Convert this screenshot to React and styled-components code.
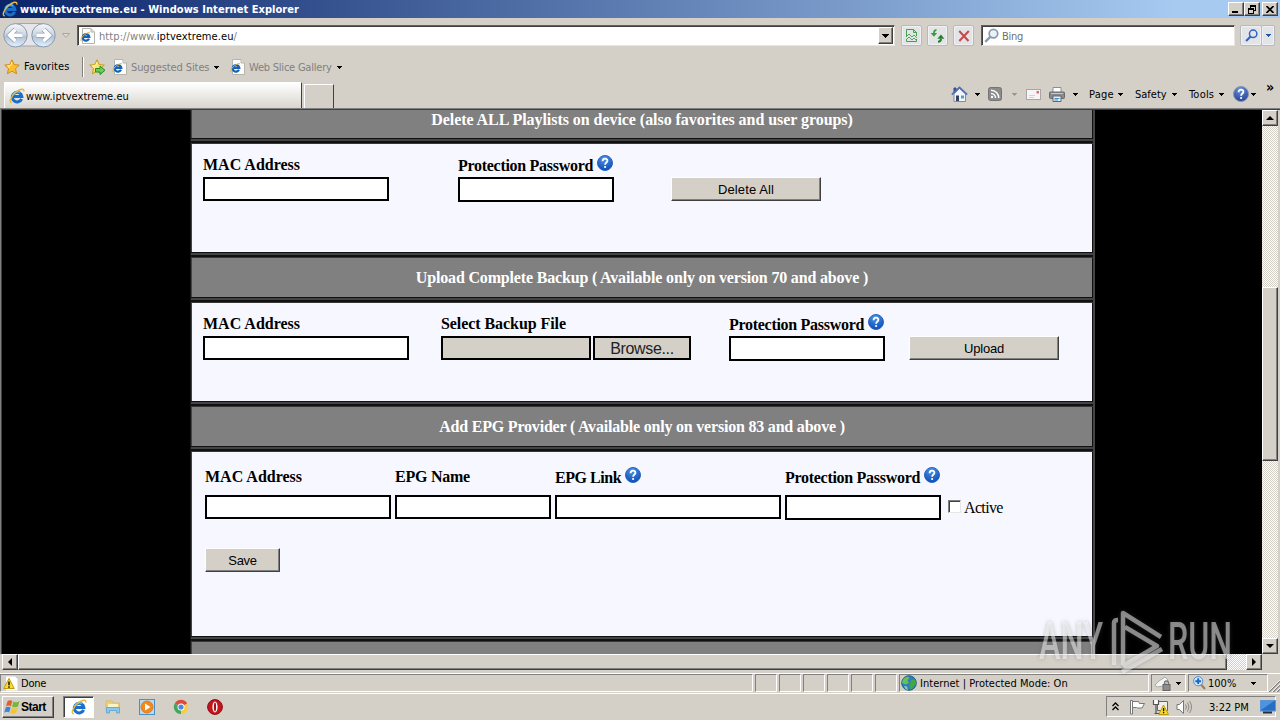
import React, { useState } from "react";
import styled, { createGlobalStyle, css } from "styled-components";

const GlobalStyle = createGlobalStyle`
  * {
    box-sizing: border-box;
  }
  body {
    margin: 0;
    overflow: hidden;
    background: #d4d0c8;
    font-family: "DejaVu Sans Condensed", "DejaVu Sans", sans-serif;
    font-size: 11px;
    color: #000;
  }
  svg {
    display: block;
    flex: none;
  }
`;

const raised = css`
  background: #d4d0c8;
  border: 1px solid;
  border-color: #fff #404040 #404040 #fff;
  box-shadow: inset -1px -1px 0 #808080;
`;

const sunken = css`
  border: 1px solid;
  border-color: #808080 #fff #fff #808080;
`;

const Window = styled.div`
  position: relative;
  display: flex;
  flex-direction: column;
  width: 1280px;
  height: 720px;
  overflow: hidden;
`;

const Text = styled.span`
  flex: none;
  width: ${(p) => (p.$w ? `${p.$w}px` : "auto")};
  margin-left: ${(p) => p.$ml || 0}px;
  padding-top: ${(p) => (p.$flat ? 0 : 2)}px;
  letter-spacing: ${(p) => p.$ls || 0}px;
  color: ${(p) => p.$color || "inherit"};
  font-weight: ${(p) => (p.$bold ? 700 : 400)};
  font-size: ${(p) => p.$size || 11}px;
  line-height: 14px;
  white-space: pre;
`;

const Host = styled.span`
  color: #000;
`;

const Slot = styled.div`
  display: flex;
  flex: none;
  margin-left: ${(p) => p.$ml || 0}px;
  padding-top: ${(p) => p.$pt || 0}px;
`;

/* title bar */
const TitleBar = styled.header`
  display: flex;
  align-items: center;
  height: 18px;
  padding: 0 2px;
  background: linear-gradient(90deg, #0a246a, #a6caf0 92%);
  color: #fff;
`;

const Spacer = styled.div`
  flex: 1;
`;

const CaptionButton = styled.button`
  ${raised}
  display: flex;
  align-items: center;
  justify-content: center;
  width: 16px;
  height: 14px;
  padding: 0;
  margin-left: ${(p) => p.$ml || 0}px;
`;

/* navigation row */
const NavRow = styled.div`
  display: flex;
  height: 34px;
  padding: 7px 0 0 3px;
`;

const NavCircles = styled.div`
  margin-top: -3px;
  width: 56px;
`;

const AddressBox = styled.div`
  display: flex;
  align-items: center;
  width: 818px;
  height: 21px;
  margin-left: 6px;
  padding: 0 1px 0 2px;
  background: #fff;
  border: 1px solid;
  border-color: #606060 #e8e4de #e8e4de #606060;
  box-shadow: inset 1px 1px 0 #404040;
`;

const ComboButton = styled.button`
  ${raised}
  display: flex;
  align-items: center;
  justify-content: center;
  width: 15px;
  height: 17px;
  padding: 0;
`;

const NavButton = styled.button`
  display: flex;
  align-items: center;
  justify-content: center;
  width: ${(p) => p.$w || 21}px;
  height: 21px;
  margin-left: ${(p) => p.$ml}px;
  padding: 0;
  background: #e3e4e6;
  border: 1px solid #b4bac2;
  border-radius: 2px;
  box-shadow: inset 0 0 0 1px #eff1f4;
`;

const SearchBox = styled(AddressBox)`
  width: 254px;
  margin-left: 7px;
`;

/* favorites row */
const FavoritesRow = styled.div`
  display: flex;
  align-items: center;
  height: 30px;
  padding-left: 4px;
`;

const Divider = styled.i`
  width: 2px;
  height: 20px;
  margin: 0 5px 0 11px;
  border-left: 1px solid #808080;
  border-right: 1px solid #fff;
`;

/* tab row */
const TabRow = styled.div`
  display: flex;
  align-items: flex-end;
  height: 26px;
  padding-left: 4px;
`;

const Tab = styled.div`
  display: flex;
  align-items: center;
  width: 298px;
  height: 26px;
  padding-left: 4px;
  background: linear-gradient(#fff, #eceae6 50%, #d9d6d0);
  border-top: 1px solid #fff;
  border-left: 1px solid #fff;
  border-right: 1px solid #404040;
`;

const NewTab = styled.div`
  width: 30px;
  height: 24px;
  margin-left: 2px;
  border: 1px solid #fff;
  border-right: 1px solid #404040;
  border-bottom: 0;
`;

const CommandBar = styled.div`
  display: flex;
  align-items: center;
  align-self: flex-start;
  height: 24px;
  margin-left: 617px;
`;

const Chevron = styled(Text)`
  align-self: flex-start;
  margin-top: -4px;
`;

/* viewport and scroll bars */
const Viewport = styled.main`
  display: flex;
  height: 546px;
  border-top: 1px solid #808080;
  border-left: 1px solid #808080;
  box-shadow: inset 1px 1px 0 #404040;
  padding: 1px 2px 0 1px;
`;

const Page = styled.div`
  display: flex;
  justify-content: flex-start;
  width: 1260px;
  height: 544px;
  padding-left: 188px;
  background: #000;
  overflow: hidden;
`;

const track = css`
  background: repeating-conic-gradient(#fff 0 25%, #d4d0c8 0 50%) 0 0 / 2px 2px;
`;

const VerticalBar = styled.div`
  ${track}
  display: flex;
  flex-direction: column;
  width: 16px;
  height: 544px;
`;

const HorizontalBar = styled.div`
  display: flex;
  height: 16px;
  padding-left: 2px;
`;

const HorizontalTrack = styled.div`
  ${track}
  width: 19px;
  height: 16px;
`;

const ScrollButton = styled.button`
  ${raised}
  display: flex;
  align-items: center;
  justify-content: center;
  width: 16px;
  height: 16px;
  padding: 0;
`;

const ThumbVertical = styled.div`
  ${raised}
  height: 174px;
  margin: 161px 0 177px;
`;

const ThumbHorizontal = styled.div`
  ${raised}
  width: 1209px;
  height: 16px;
`;

/* site form */
const Frame = styled.div`
  width: 905px;
  height: 544px;
  border-left: 1px solid #161616;
  border-right: 2px solid #444;
  overflow: hidden;
`;

const Inner = styled.div`
  border-left: 1px solid #444;
  border-right: 1px solid #111;
`;

const Separator = styled.div`
  height: 6px;
  margin: 0 -1px;
  background: linear-gradient(
    #111 0 1px,
    #444 1px 3px,
    #111 3px 5px,
    #383838 5px 6px
  );
`;

const Heading = styled.h2`
  display: flex;
  justify-content: center;
  height: ${(p) => p.$h || 39}px;
  margin: 0;
  padding-top: ${(p) => (p.$pt === undefined ? 10 : p.$pt)}px;
  background: #808080;
  color: #fff;
  font: bold 16px/20px "Liberation Serif", serif;
  letter-spacing: ${(p) => p.$ls || 0}px;
  white-space: pre;
`;

const Panel = styled.section`
  height: ${(p) => p.$h}px;
  padding: ${(p) => p.$pt}px 0 0 ${(p) => p.$pl}px;
  background: #f7f8ff;
`;

const Fields = styled.div`
  display: flex;
  align-items: flex-start;
`;

const FieldBox = styled.div`
  width: ${(p) => p.$w}px;
  margin-left: ${(p) => p.$ml || 0}px;
`;

const FieldLabel = styled.label`
  display: flex;
  height: ${(p) => p.$h}px;
  padding-top: ${(p) => (p.$help ? 1 : 0)}px;
  font: bold 16px/20px "Liberation Serif", serif;
  letter-spacing: ${(p) => p.$ls || 0}px;
  white-space: pre;

  svg {
    margin: -1px 0 0 4px;
  }
`;

const Input = styled.input`
  display: block;
  width: 100%;
  height: ${(p) => p.$h || 24}px;
  padding: 1px 3px;
  background: #fff;
  border: 2px solid #000;
  border-radius: 0;
  outline: none;
`;

const FileRow = styled.div`
  display: flex;
  gap: 2px;
`;

const FilePath = styled.div`
  width: 150px;
  height: 24px;
  background: #d4d0c8;
  border: 2px solid #000;
`;

const Browse = styled.button`
  width: 98px;
  height: 24px;
  padding: 1px 0 0;
  background: #d4d0c8;
  border: 2px solid #000;
  color: #222;
  font: 16px/19px "Liberation Sans", sans-serif;
  letter-spacing: -0.35px;
`;

const PushButton = styled.button`
  ${raised}
  width: ${(p) => p.$w || 150}px;
  height: 24px;
  margin: ${(p) => p.$mt}px 0 0 ${(p) => p.$ml || 0}px;
  padding: 2px 0 0;
  font: 13px/20px "Liberation Sans", sans-serif;
  letter-spacing: ${(p) => p.$ls || 0}px;
`;

const Check = styled.button`
  width: 13px;
  height: 13px;
  margin: 33px 0 0 7px;
  padding: 0;
  background: #fff;
  border: 1px solid;
  border-color: #808080 #e8e6e0 #e8e6e0 #808080;
  box-shadow: inset 1px 1px 0 #404040;
  font: 10px/10px "DejaVu Sans", sans-serif;
`;

const CheckLabel = styled.span`
  margin: 31px 0 0 3px;
  font: 16px/20px "Liberation Serif", serif;
  letter-spacing: -0.65px;
`;

/* status bar */
const StatusBar = styled.div`
  display: flex;
  height: 19px;
  margin-top: 3px;
  border-top: 1px solid #fff;
`;

const StatusCell = styled.div`
  ${sunken}
  display: flex;
  align-items: center;
  width: ${(p) => p.$w}px;
  height: 18px;
  margin-right: ${(p) => (p.$mr === undefined ? 2 : p.$mr)}px;
  padding-left: ${(p) => p.$pl || 0}px;
`;

/* taskbar */
const TaskBar = styled.footer`
  display: flex;
  height: 27px;
  margin-top: 1px;
  padding: 2px 4px 0 2px;
  border-top: 1px solid #fff;
`;

const StartButton = styled.button`
  ${raised}
  display: flex;
  align-items: center;
  width: 52px;
  height: 22px;
  padding: 0 0 0 1px;
`;

const ActiveTask = styled.div`
  ${sunken}
  display: flex;
  align-items: center;
  justify-content: center;
  width: 31px;
  height: 22px;
  margin-left: 9px;
  background: #fff;
  box-shadow: inset 1px 1px 0 #404040;
`;

const TaskIcon = styled.div`
  width: 16px;
  margin: 3px 0 0 ${(p) => p.$ml}px;
`;

const Tray = styled.div`
  ${sunken}
  display: flex;
  align-items: center;
  width: 170px;
  height: 21px;
  padding-left: 5px;
`;

const Watermark = styled.svg`
  position: absolute;
  left: 1030px;
  top: 604px;
  filter: drop-shadow(0 0 2px rgba(80, 80, 80, 0.7));
  pointer-events: none;
`;

const Arrow = ({ color = "#000", ml = 0, w = 5, h = 3 }) => (
  <Slot $ml={ml}>
    <svg width={w} height={h} viewBox={`0 0 ${w} ${h}`} shapeRendering="crispEdges">
      <path d={`M0 0H${w}L${w / 2} ${h}Z`} fill={color} />
    </svg>
  </Slot>
);

const ScrollArrow = ({ turn }) => (
  <svg width="8" height="8" viewBox="0 0 8 8">
    <path d="M0 6L4 2L8 6Z" transform={`rotate(${turn} 4 4)`} />
  </svg>
);

const IeIcon = ({ size = 16 }) => (
  <svg width={size} height={size} viewBox="0 0 16 16">
    <path
      d="M12.6 10.9A4.8 4.8 0 1 1 12.9 8.6H4.2"
      fill="none"
      stroke="#1a6fca"
      strokeWidth="3"
    />
    <path
      d="M3.6 7.3A4.9 4.9 0 0 1 11 4.6"
      fill="none"
      stroke="#5cbcf2"
      strokeWidth="1.6"
    />
    <path
      d="M2.8 14.8C-.4 15 1.6 8.7 6.8 4.3C10.7 1 15.6-.2 14.8 3.6"
      fill="none"
      stroke="#e9b93a"
      strokeWidth="1.4"
    />
  </svg>
);

const IePage = () => (
  <svg width="15" height="16" viewBox="0 0 15 16">
    <path d="M2.5.5H11L14.5 4V15.5H2.5Z" fill="#fdfdfd" stroke="#b5b5ac" />
    <path d="M11 .5V4H14.5" fill="#ddd" stroke="#b5b5ac" />
    <path
      d="M9 10.8A3.3 3.3 0 1 1 9.3 8.9H3.5"
      fill="none"
      stroke="#1762b8"
      strokeWidth="2.2"
    />
    <path
      d="M1.3 13.2C-.6 11 5 4.4 9.8 4.6"
      fill="none"
      stroke="#e4b038"
      strokeWidth="1"
    />
  </svg>
);

const NavArrows = () => (
  <svg width="56" height="27" viewBox="0 0 56 27">
    <defs>
      <linearGradient id="glass" x1="0" y1="0" x2="0" y2="1">
        <stop offset="0" stopColor="#f6f7fa" />
        <stop offset=".48" stopColor="#cdd5e0" />
        <stop offset=".55" stopColor="#b3c2d5" />
        <stop offset="1" stopColor="#e4f3fd" />
      </linearGradient>
    </defs>
    <path d="M12 1.5H40L46 7V19L40 24H12Z" fill="#e6e6ea" stroke="#a4a6b0" />
    {[12.5, 40.5].map((x) => (
      <circle
        key={x}
        cx={x}
        cy="13.3"
        r="11.7"
        fill="url(#glass)"
        stroke="#8999ad"
      />
    ))}
    <g stroke="#8fa2bc" strokeWidth="5" fill="none">
      <path d="M12.5 7.5L6.5 13.3L12.5 19M7 13.3H19.5" />
      <path d="M40.5 7.5L46.5 13.3L40.5 19M46 13.3H33.5" />
    </g>
    <g stroke="#fff" strokeWidth="3.4" fill="none">
      <path d="M12.5 7.5L6.5 13.3L12.5 19M7 13.3H19.5" />
      <path d="M40.5 7.5L46.5 13.3L40.5 19M46 13.3H33.5" />
    </g>
  </svg>
);

const Star = ({ arrow }) => (
  <svg width="17" height="16" viewBox="0 0 17 16">
    <path
      d="M8 .8L10.2 5.6L15.3 6.1L11.5 9.6L12.6 14.8L8 12.1L3.4 14.8L4.5 9.6L.7 6.1L5.8 5.6Z"
      fill={arrow ? "#fae36a" : "#fbc02d"}
      stroke={arrow ? "#c79a1c" : "#d58a1c"}
    />
    <path d="M8 3L6.7 6.6L3.5 7L6 9" fill="none" stroke="#fff3b0" />
    {arrow && (
      <path
        d="M6.5 9.5H11V7L16 11.3L11 15.5V13H6.5Z"
        fill="#69cf4f"
        stroke="#2c8b27"
      />
    )}
  </svg>
);

const CompatIcon = () => (
  <svg width="13" height="15" viewBox="0 0 13 15" fill="none" stroke="#43a04c">
    <path d="M1.5 8V1.5H8.5L11.5 4.5V8M8.5 1.5V4.5H11.5M1.5 11V13.5H11.5V11" />
    <path d="M1 9L4 6L7 9L9 7L12 10M1 12L4 9L7 12L9 10L12 13" strokeWidth=".9" />
  </svg>
);

const RefreshIcon = () => (
  <svg width="15" height="14" viewBox="0 0 15 14">
    <path d="M6.5 1.2C4.8 1 3.9 2 3.9 4" fill="none" stroke="#3a9c3c" strokeWidth="1.8" />
    <path d="M.6 4H7.2L3.9 7.8Z" fill="#3a9c3c" />
    <path d="M8 12.8C10 12.8 10.9 11.5 10.9 10" fill="none" stroke="#217f2b" strokeWidth="2" />
    <path d="M7.4 9.8H14.4L10.9 5.6Z" fill="#217f2b" />
  </svg>
);

const StopIcon = () => (
  <svg width="12" height="12" viewBox="0 0 12 12">
    <path d="M1.2 1L10.5 11M10.8 1L1.3 11" stroke="#c64a4a" strokeWidth="2" />
  </svg>
);

const SearchIcon = ({ color, size = 14, glass = "none" }) => (
  <svg width={size} height={size} viewBox="0 0 14 14">
    <circle cx="8.8" cy="5.2" r="4" fill={glass} stroke={color} strokeWidth="1.6" />
    <path d="M6 8L1.2 13" stroke={color} strokeWidth="2.2" />
  </svg>
);

const HomeIcon = () => (
  <svg width="17" height="17" viewBox="0 0 17 17">
    <path d="M3 2H5V6L3 8Z" fill="#5b3c8c" stroke="#3a4a98" />
    <path d="M3 8V15.5H14.5V8L8.5 2.5Z" fill="#f1f5fc" stroke="#7d8cab" />
    <path d="M.8 8.6L8.5 1.3L16.2 8.6" fill="none" stroke="#4c70b8" strokeWidth="1.6" />
    <path d="M5 9.5H8V15H5Z" fill="#34405e" />
    <path d="M10 9.5H13V12.5H10Z" fill="#4aa0d4" />
  </svg>
);

const RssIcon = () => (
  <svg width="14" height="14" viewBox="0 0 14 14">
    <rect x=".5" y=".5" width="13" height="13" rx="2" fill="#8b8b8b" stroke="#747474" />
    <path d="M3 6.5A4.5 4.5 0 0 1 7.5 11M3 3.2A7.8 7.8 0 0 1 10.8 11" fill="none" stroke="#fff" strokeWidth="1.5" />
    <circle cx="4" cy="10" r="1.2" fill="#fff" />
  </svg>
);

const MailIcon = () => (
  <svg width="15" height="11" viewBox="0 0 15 11">
    <rect x=".5" y=".5" width="14" height="10" fill="#f7f5f5" stroke="#aaa5a5" />
    <path d="M10.5 2H13V4.5H10.5Z" fill="#d96e74" />
    <path d="M3 6.5H9M3 8.5H8" stroke="#d4d1d1" />
  </svg>
);

const PrinterIcon = () => (
  <svg width="16" height="15" viewBox="0 0 16 15">
    <path d="M4 .5H12V6H4Z" fill="#fff" stroke="#8e8e8e" />
    <rect x=".5" y="5" width="15" height="6.5" rx="1" fill="#87898c" stroke="#6a6b6e" />
    <path d="M2 6.5H14" stroke="#c6c8ca" />
    <path d="M4 9H12V14.5H4Z" fill="#e3f2fb" stroke="#666" />
    <path d="M5.5 11.5H10.5M5.5 13H9" stroke="#3d8ec6" />
  </svg>
);

const HelpIcon = ({ dark }) => (
  <svg width="16" height="16" viewBox="0 0 16 16">
    <defs>
      <radialGradient id={dark ? "helpDark" : "help"} cx=".45" cy=".2" r=".85">
        <stop offset="0" stopColor={dark ? "#6c92dc" : "#4d96e6"} />
        <stop offset="1" stopColor={dark ? "#203d94" : "#0a48b4"} />
      </radialGradient>
    </defs>
    <circle
      cx="8"
      cy="8"
      r="7.5"
      fill={`url(#${dark ? "helpDark" : "help"})`}
      stroke={dark ? "#8793b4" : "#2a63c4"}
    />
    <path
      d="M5.6 6.2C5.6 2.9 10.5 3 10.4 5.9C10.3 7.6 8.1 7.6 8.1 9.8"
      fill="none"
      stroke="#fff"
      strokeWidth="1.8"
    />
    <circle cx="8.1" cy="12" r="1.1" fill="#fff" />
  </svg>
);

const WarningIcon = () => (
  <svg width="15" height="15" viewBox="0 0 15 15">
    <path d="M3 .5H12L14.5 3V14.5H3Z" fill="#fff" />
    <path d="M6 2.5L11.3 12.5H.7Z" fill="#f9dc28" stroke="#c09b13" />
    <path d="M6 5.5V9.3M6 10.3V11.7" stroke="#111" strokeWidth="1.5" />
  </svg>
);

const GlobeIcon = () => (
  <svg width="16" height="16" viewBox="0 0 16 16">
    <circle cx="8" cy="8" r="7.3" fill="#2f7cc4" stroke="#275e86" />
    <path d="M2 4.5C4 1.5 7 1 8.5 2.5L6.5 5.5L8 8L4.5 9.5L1 8Z" fill="#63c354" />
    <path d="M10 5L14 4.5L15 8.5L12 13L9 14.5L8.5 10.5Z" fill="#3fa945" />
    <path d="M3 11L6 11.5L7 15L4.5 14Z" fill="#79d4b6" />
  </svg>
);

const LockIcon = () => (
  <svg width="16" height="15" viewBox="0 0 16 15">
    <path d="M0 9L4 5L10 1L13 4L9 10L2 11Z" fill="#f4f4f4" stroke="#aaa" />
    <path d="M9.5 9V7A2 2 0 0 1 13.5 7V9" fill="none" stroke="#777" strokeWidth="1.3" />
    <rect x="8" y="8.5" width="7" height="6" fill="#8d8d8d" stroke="#666" />
  </svg>
);

const ZoomIcon = () => (
  <svg width="13" height="14" viewBox="0 0 13 14">
    <path d="M8 8.5L12 13" stroke="#9c8050" strokeWidth="2" />
    <circle cx="5.2" cy="5.2" r="4.6" fill="#d4eafd" stroke="#5288cd" />
    <path d="M5.2 2.3V8.1M2.3 5.2H8.1" stroke="#1867c5" strokeWidth="2" />
  </svg>
);

const Grip = () => (
  <svg width="12" height="12" viewBox="0 0 12 12">
    <path d="M1 12L12 1M5 12L12 5M9 12L12 9" stroke="#808080" strokeWidth="1.5" />
    <path d="M0 12L12 0M4 12L12 4M8 12L12 8" stroke="#fff" strokeWidth=".8" />
  </svg>
);

const WindowsIcon = () => (
  <svg width="17" height="16" viewBox="0 0 17 16">
    <path d="M3.5 2.2C5.3.9 6.8 1.1 8.3 2L6.9 7.2C5.2 6.2 3.7 6.4 2 7.4Z" fill="#e65d27" />
    <path d="M9.4 2.6C11.5 3.8 13.3 3.3 15.5 2.3L14 7.5C12 8.6 10 8.6 8 7.7Z" fill="#76b83f" />
    <path d="M1.7 8.6C3.5 7.4 5 7.5 6.6 8.4L5.1 13.5C3.5 12.5 1.9 12.6.2 13.7Z" fill="#3b86d2" />
    <path d="M7.7 8.9C9.6 10 11.8 9.7 13.7 8.7L12.2 13.8C10 15 8 14.8 6.2 13.9Z" fill="#f4c52c" />
  </svg>
);

const ExplorerIcon = () => (
  <svg width="16" height="16" viewBox="0 0 16 16">
    <path d="M1 2H7L8 4H14.5V11H1Z" fill="#edcf73" stroke="#d9bd6c" />
    <path d="M3 5H13V8H3Z" fill="#fbf3c9" />
    <path d="M1.5 14V8.5H14.5V14H11.5V11.5H4.5V14Z" fill="#8ac7e9" stroke="#6aaad0" />
  </svg>
);

const MediaIcon = () => (
  <svg width="16" height="16" viewBox="0 0 16 16">
    <rect x=".5" y=".5" width="15" height="15" fill="#b7dbf4" stroke="#4a90c8" />
    <circle cx="8" cy="8" r="6" fill="#f18a1d" stroke="#e07a1c" />
    <path d="M6 4.5L11.5 8L6 11.5Z" fill="#fff" />
  </svg>
);

const ChromeIcon = () => (
  <svg width="16" height="16" viewBox="0 0 16 16">
    <path d="M8 8L1.8 4.4A7.1 7.1 0 0 1 14.2 4.4Z" fill="#dd4b3e" />
    <path d="M8 8L14.2 4.4A7.1 7.1 0 0 1 8 15.1Z" fill="#f7cd43" />
    <path d="M8 8L8 15.1A7.1 7.1 0 0 1 1.8 4.4Z" fill="#45a659" />
    <circle cx="8" cy="8" r="3.5" fill="#fff" />
    <circle cx="8" cy="8" r="2.6" fill="#4a87ed" />
  </svg>
);

const OperaIcon = () => (
  <svg width="16" height="16" viewBox="0 0 16 16">
    <circle cx="8" cy="8" r="7.4" fill="#c4141c" stroke="#8c0d13" />
    <ellipse cx="8" cy="8" rx="2.6" ry="5.4" fill="#fff" />
    <ellipse cx="8" cy="8" rx="1.1" ry="4.4" fill="#a01218" />
  </svg>
);

const FlagIcon = () => (
  <svg width="17" height="16" viewBox="0 0 17 16" fill="#fff" stroke="#777">
    <path d="M1.5 1.5H3.5V15H1.5Z" />
    <path d="M3.5 2.5H9.5L10.5 4.5H15.5L13 9H8.5L7.5 8.5H3.5Z" />
  </svg>
);

const NetworkIcon = () => (
  <svg width="17" height="16" viewBox="0 0 17 16">
    <path d="M5.5 2.5H15.5V11.5H5.5Z" fill="#eee" stroke="#666" />
    <path d="M1.5 1H6.5V5.5H1.5Z" fill="#fff" />
    <path d="M1.5 1V5.5H6.5V1M4 5.5V14.5M2.5 14.5H8" fill="none" stroke="#555" strokeWidth="1.2" />
    <path d="M11.5 6L16.5 15.5H6.8Z" fill="#fadc21" stroke="#bd9810" />
    <path d="M11.6 9V12.3M11.6 13V14.3" stroke="#111" strokeWidth="1.3" />
  </svg>
);

const SpeakerIcon = () => (
  <svg width="17" height="16" viewBox="0 0 17 16">
    <path d="M1 5.5H3.5L7.5 1.5V14.5L3.5 10.5H1Z" fill="#fff" stroke="#777" />
    <path d="M9.5 5.5Q11.5 8 9.5 10.5M11.5 3.5Q14.5 8 11.5 12.5M13.5 2Q17.5 8 13.5 14" fill="none" stroke="#888" />
  </svg>
);

const DesktopIcon = () => (
  <svg width="16" height="14" viewBox="0 0 16 14">
    <rect x=".5" y=".5" width="15" height="10.5" fill="#286dc4" stroke="#5b94d7" />
    <path d="M1 10L14 1H1Z" fill="#4a94e0" />
    <path d="M3 12.5H12" stroke="#262e3a" strokeWidth="2" />
  </svg>
);

const Field = ({ label, help, w, ml, labelHeight, ls }) => {
  const [value, setValue] = useState("");
  return (
    <FieldBox $w={w} $ml={ml}>
      <FieldLabel $h={labelHeight} $help={help} $ls={ls}>
        {label}
        {help && <HelpIcon />}
      </FieldLabel>
      <Input
        $h={label === "Protection Password" ? 25 : 24}
        value={value}
        onChange={(e) => setValue(e.target.value)}
      />
    </FieldBox>
  );
};

const BrowserTop = () => (
  <>
    <TitleBar>
      <IeIcon />
      <Text $ml={2} $bold $ls={0.05}>
        www.iptvextreme.eu - Windows Internet Explorer
      </Text>
      <Spacer />
      <CaptionButton>
        <svg width="8" height="8">
          <path d="M0 6H6V8H0Z" />
        </svg>
      </CaptionButton>
      <CaptionButton>
        <svg width="9" height="9" shapeRendering="crispEdges">
          <path d="M2 0H8V6H6V5H7V2H3V3H2ZM0 3H6V9H0ZM1 5V8H5V5Z" fillRule="evenodd" />
        </svg>
      </CaptionButton>
      <CaptionButton $ml={2}>
        <svg width="8" height="7">
          <path d="M.5 0L7.5 7M7.5 0L.5 7" stroke="#000" strokeWidth="1.7" />
        </svg>
      </CaptionButton>
    </TitleBar>
    <NavRow>
      <NavCircles>
        <NavArrows />
      </NavCircles>
      <Slot $ml={3}>
        <svg width="9" height="20" viewBox="0 0 9 20">
          <path d="M.5 8.5H7.5L4 12.5Z" fill="#dedad4" stroke="#aaa69f" />
        </svg>
      </Slot>
      <AddressBox>
        <IePage />
        <Text $ml={4} $ls={0.09} $color="#808080">
          http://www.<Host>iptvextreme.eu</Host>/
        </Text>
        <Spacer />
        <ComboButton>
          <Arrow w={7} h={4} />
        </ComboButton>
      </AddressBox>
      <NavButton $ml={6}>
        <CompatIcon />
      </NavButton>
      <NavButton $ml={5}>
        <RefreshIcon />
      </NavButton>
      <NavButton $ml={5}>
        <StopIcon />
      </NavButton>
      <SearchBox>
        <SearchIcon color="#8b9bab" size={15} glass="#e8f2f8" />
        <Text $ml={3} $ls={-0.3} $color="#707070">
          Bing
        </Text>
      </SearchBox>
      <NavButton $ml={5} $w={22}>
        <SearchIcon color="#2c62cc" size={13} />
      </NavButton>
      <NavButton $ml={-1} $w={14}>
        <Arrow color="#2454a8" />
      </NavButton>
    </NavRow>
    <FavoritesRow>
      <Star />
      <Text $ml={3} $w={47} $ls={0.1} $flat>
        Favorites
      </Text>
      <Divider />
      <Star arrow />
      <Slot $ml={6}>
        <IePage />
      </Slot>
      <Text $ml={4} $w={79} $ls={-0.1} $color="#808080">
        Suggested Sites
      </Text>
      <Arrow ml={4} />
      <Slot $ml={11}>
        <IePage />
      </Slot>
      <Text $ml={4} $w={84} $ls={-0.22} $color="#808080">
        Web Slice Gallery
      </Text>
      <Arrow ml={4} />
    </FavoritesRow>
    <TabRow>
      <Tab>
        <IeIcon />
        <Text $ml={1} $ls={0.05}>
          www.iptvextreme.eu
        </Text>
      </Tab>
      <NewTab />
      <CommandBar>
        <HomeIcon />
        <Arrow ml={7} />
        <Slot $ml={8}>
          <RssIcon />
        </Slot>
        <Arrow ml={10} color="#9b978f" />
        <Slot $ml={9}>
          <MailIcon />
        </Slot>
        <Slot $ml={8}>
          <PrinterIcon />
        </Slot>
        <Arrow ml={8} />
        <Text $ml={11} $w={26} $ls={0.2}>
          Page
        </Text>
        <Arrow ml={3} />
        <Text $ml={12} $w={34}>
          Safety
        </Text>
        <Arrow ml={3} />
        <Text $ml={12} $w={27} $ls={0.2}>
          Tools
        </Text>
        <Arrow ml={3} />
        <Slot $ml={9}>
          <HelpIcon dark />
        </Slot>
        <Arrow ml={2} />
        <Chevron $ml={10} $bold $size={14}>
          »
        </Chevron>
      </CommandBar>
    </TabRow>
  </>
);

const EpgPanel = () => {
  const [active, setActive] = useState(false);
  return (
    <Panel $h={184} $pt={15} $pl={13}>
      <Fields>
        <Field label="MAC Address" w={186} labelHeight={28} />
        <Field label="EPG Name" w={156} ml={4} ls={-0.25} labelHeight={28} />
        <Field label="EPG Link" help w={226} ml={4} ls={-0.45} labelHeight={28} />
        <Field label="Protection Password" help w={156} ml={4} ls={-0.29} labelHeight={28} />
        <Check onClick={() => setActive((prev) => !prev)}>
          {active ? "✓" : ""}
        </Check>
        <CheckLabel>Active</CheckLabel>
      </Fields>
      <PushButton $w={75} $mt={28} $ls={-0.3}>
        Save
      </PushButton>
    </Panel>
  );
};

const Site = () => (
  <Page>
    <Frame>
      <Inner>
        <Heading $h={28} $pt={0} $ls={-0.05}>
          Delete ALL Playlists on device (also favorites and user groups)
        </Heading>
        <Separator />
        <Panel $h={108} $pt={11} $pl={11}>
          <Fields>
            <Field label="MAC Address" w={186} labelHeight={22} />
            <Field label="Protection Password" help w={156} ml={69} ls={-0.29} labelHeight={22} />
            <PushButton $mt={22} $ml={57} $ls={0.1}>
              Delete All
            </PushButton>
          </Fields>
        </Panel>
        <Separator />
        <Heading $ls={-0.17}>
          Upload Complete Backup ( Available only on version 70 and above )
        </Heading>
        <Separator />
        <Panel $h={98} $pt={11} $pl={11}>
          <Fields>
            <Field label="MAC Address" w={206} labelHeight={22} />
            <FieldBox $w={250} $ml={32}>
              <FieldLabel $h={22} $ls={-0.07}>
                Select Backup File
              </FieldLabel>
              <FileRow>
                <FilePath />
                <Browse>Browse...</Browse>
              </FileRow>
            </FieldBox>
            <Field label="Protection Password" help w={156} ml={38} ls={-0.29} labelHeight={22} />
            <PushButton $mt={22} $ml={24} $ls={-0.2}>
              Upload
            </PushButton>
          </Fields>
        </Panel>
        <Separator />
        <Heading $ls={-0.2}>
          Add EPG Provider ( Available only on version 83 and above )
        </Heading>
        <Separator />
        <EpgPanel />
        <Separator />
        <Heading $h={12} />
      </Inner>
    </Frame>
  </Page>
);

const BrowserBottom = () => (
  <>
    <HorizontalBar>
      <ScrollButton>
        <ScrollArrow turn={-90} />
      </ScrollButton>
      <ThumbHorizontal />
      <HorizontalTrack />
      <ScrollButton>
        <ScrollArrow turn={90} />
      </ScrollButton>
    </HorizontalBar>
    <StatusBar>
      <StatusCell $w={753} $pl={2}>
        <WarningIcon />
        <Text $ml={3} $ls={-0.2}>
          Done
        </Text>
      </StatusCell>
      {[0, 1, 2, 3, 4, 5].map((cell) => (
        <StatusCell key={cell} $w={22} />
      ))}
      <StatusCell $w={250} $pl={1}>
        <GlobeIcon />
        <Text $ml={3} $ls={0.03}>
          Internet | Protected Mode: On
        </Text>
      </StatusCell>
      <StatusCell $w={35} $pl={3}>
        <LockIcon />
        <Arrow ml={5} />
      </StatusCell>
      <StatusCell $w={80} $mr={0} $pl={4}>
        <ZoomIcon />
        <Text $ml={2} $w={30}>
          100%
        </Text>
        <Arrow ml={13} />
      </StatusCell>
      <Slot $pt={6}>
        <Grip />
      </Slot>
    </StatusBar>
    <TaskBar>
      <StartButton>
        <WindowsIcon />
        <Text $bold $size={12} $ls={-0.5} $flat>
          Start
        </Text>
      </StartButton>
      <ActiveTask>
        <IeIcon />
      </ActiveTask>
      <TaskIcon $ml={11}>
        <ExplorerIcon />
      </TaskIcon>
      <TaskIcon $ml={18}>
        <MediaIcon />
      </TaskIcon>
      <TaskIcon $ml={18}>
        <ChromeIcon />
      </TaskIcon>
      <TaskIcon $ml={18}>
        <OperaIcon />
      </TaskIcon>
      <Spacer />
      <Tray>
        <svg width="7" height="9" viewBox="0 0 7 9" fill="none" stroke="#000" strokeWidth="1.3">
          <path d="M.5 4L3.5 1L6.5 4M.5 8L3.5 5L6.5 8" />
        </svg>
        <Slot $ml={10}>
          <FlagIcon />
        </Slot>
        <Slot $ml={6}>
          <NetworkIcon />
        </Slot>
        <Slot $ml={7}>
          <SpeakerIcon />
        </Slot>
        <Text $ml={16} $w={42}>
          3:22 PM
        </Text>
        <Slot $ml={9}>
          <DesktopIcon />
        </Slot>
      </Tray>
    </TaskBar>
  </>
);

const App = () => (
  <Window>
    <GlobalStyle />
    <BrowserTop />
    <Viewport>
      <Site />
      <VerticalBar>
        <ScrollButton>
          <ScrollArrow turn={0} />
        </ScrollButton>
        <ThumbVertical />
        <ScrollButton>
          <ScrollArrow turn={180} />
        </ScrollButton>
      </VerticalBar>
    </Viewport>
    <BrowserBottom />
    <Watermark width="248" height="76" viewBox="0 0 248 76">
      <g
        fill="#fff"
        fillOpacity=".5"
        fontFamily="Roboto, sans-serif"
        fontWeight="500"
        fontSize="51"
      >
        <text x="9" y="55" textLength="64" lengthAdjust="spacingAndGlyphs">
          ANY
        </text>
        <text x="138" y="55" textLength="64" lengthAdjust="spacingAndGlyphs">
          RUN
        </text>
      </g>
      <path
        d="M88 16Q84 16 84 19V61M131 33L93 9V61M95 23L127 42L93 62M132 45L92 68"
        fill="none"
        stroke="#fff"
        strokeOpacity=".5"
        strokeWidth="4.5"
        strokeLinejoin="round"
      />
    </Watermark>
  </Window>
);

export default App;
